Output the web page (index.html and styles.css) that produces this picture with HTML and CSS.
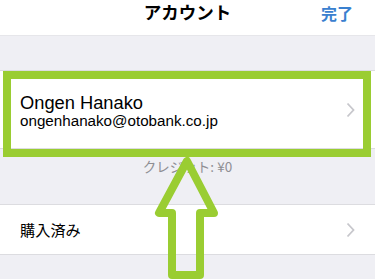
FILE: index.html
```html
<!DOCTYPE html>
<html lang="ja">
<head>
<meta charset="utf-8">
<link rel="stylesheet" href="styles.css">
</head>
<body>
<div class="screen">
  <header class="nav">
    <span class="nav-title">アカウント</span>
    <span class="nav-done">完了</span>
  </header>
  <section class="group first">
    <div class="row account">
      <div class="account-text">
        <div class="name">Ongen Hanako</div>
        <div class="email">ongenhanako@otobank.co.jp</div>
      </div>
      <svg class="chev" width="9" height="16" viewBox="0 0 9 16"><path d="M1.5 1.5 L7.5 8 L1.5 14.5" fill="none" stroke="#c7c7cc" stroke-width="1.8"/></svg>
    </div>
  </section>
  <div class="credit">クレジット: ¥0</div>
  <section class="group">
    <div class="row purchased">
      <span class="label">購入済み</span>
      <svg class="chev" width="9" height="16" viewBox="0 0 9 16"><path d="M1.5 1.5 L7.5 8 L1.5 14.5" fill="none" stroke="#c7c7cc" stroke-width="1.8"/></svg>
    </div>
  </section>
  <div class="highlight"></div>
  <svg class="arrow" width="375" height="279" viewBox="0 0 375 279">
    <polygon points="187,161 159,213 172,213 172,275 200,275 200,213 214,213" fill="none" stroke="#9acd32" stroke-width="8" stroke-linejoin="round"/>
  </svg>
</div>
</body>
</html>
```
FILE: styles.css
```css
html, body {
  margin: 0;
  padding: 0;
}
body {
  background: #efeff4;
  font-family: "Liberation Sans", "Noto Sans CJK JP", sans-serif;
  color: #000;
}
.screen {
  position: relative;
  width: 375px;
  height: 279px;
  overflow: hidden;
}
.nav {
  height: 36px;
  background: #fff;
  display: flex;
  align-items: center;
  justify-content: center;
  position: relative;
  border-bottom: 1px solid #e6e6ea;
  box-sizing: border-box;
}
.nav-title {
  font-family: "Noto Sans CJK JP", sans-serif;
  font-size: 17.5px;
  font-weight: 700;
  margin-top: -12px;
}
.nav-done {
  position: absolute;
  right: 22px;
  top: 1px;
  font-family: "Noto Sans CJK JP", sans-serif;
  font-size: 16px;
  font-weight: 700;
  color: #3a80cf;
}
.group {
  background: #fff;
  border-top: 1px solid #dcdce0;
  border-bottom: 1px solid #dcdce0;
}
.group.first {
  margin-top: 34px;
}
.row {
  display: flex;
  align-items: center;
  justify-content: space-between;
  padding: 0 20px;
}
.account {
  height: 77px;
}
.account-text {
  padding-top: 3px;
}
.name {
  font-size: 18.3px;
  line-height: 19px;
}
.email {
  font-size: 15.2px;
  line-height: 18px;
}
.chev {
  display: block;
  margin-right: 0;
}
.credit {
  height: 55px;
  text-align: center;
  font-family: "Noto Sans CJK JP", sans-serif;
  font-size: 13.5px;
  color: #8e8e93;
  line-height: 34px;
}
.purchased {
  height: 49px;
}
.label {
  font-family: "Noto Sans CJK JP", sans-serif;
  font-size: 15.2px;
  margin-top: -1px;
}
.highlight {
  position: absolute;
  left: 3px;
  top: 71px;
  width: 368px;
  height: 86px;
  box-sizing: border-box;
  border: 8px solid #9acd32;
}
.arrow {
  position: absolute;
  left: 0;
  top: 0;
}
```
